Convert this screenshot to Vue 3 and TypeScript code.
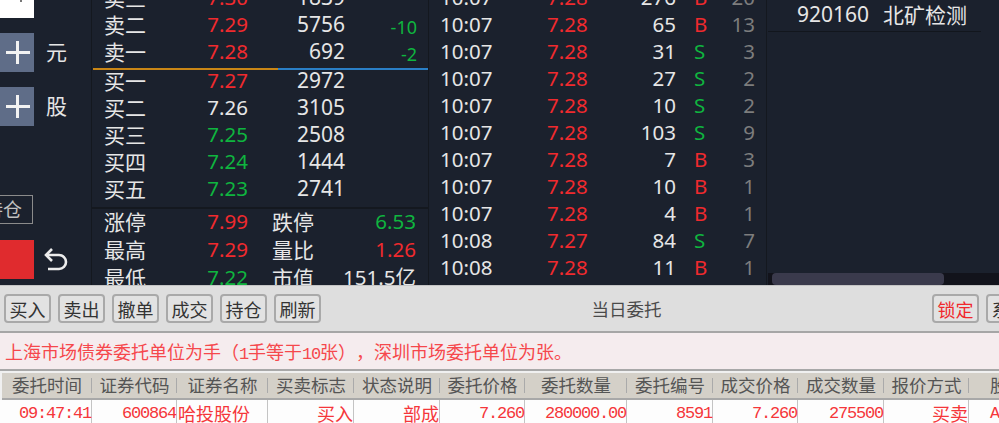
<script setup lang="ts">
type Tone = 'red' | 'green' | 'white'

const asks = [
  { name: '卖三', price: '7.30', tone: 'red', qty: '1839', delta: '' },
  { name: '卖二', price: '7.29', tone: 'red', qty: '5756', delta: '-10' },
  { name: '卖一', price: '7.28', tone: 'red', qty: '692', delta: '-2' },
]
const bids = [
  { name: '买一', price: '7.27', tone: 'red', qty: '2972', delta: '' },
  { name: '买二', price: '7.26', tone: 'white', qty: '3105', delta: '' },
  { name: '买三', price: '7.25', tone: 'green', qty: '2508', delta: '' },
  { name: '买四', price: '7.24', tone: 'green', qty: '1444', delta: '' },
  { name: '买五', price: '7.23', tone: 'green', qty: '2741', delta: '' },
]
const stats: { a: string; av: string; at: Tone; b: string; bv: string; bt: Tone }[] = [
  { a: '涨停', av: '7.99', at: 'red', b: '跌停', bv: '6.53', bt: 'green' },
  { a: '最高', av: '7.29', at: 'red', b: '量比', bv: '1.26', bt: 'red' },
  { a: '最低', av: '7.22', at: 'green', b: '市值', bv: '151.5亿', bt: 'white' },
]
const ticks = [
  ['10:07', '7.28', '276', 'B', '20'],
  ['10:07', '7.28', '65', 'B', '13'],
  ['10:07', '7.28', '31', 'S', '3'],
  ['10:07', '7.28', '27', 'S', '2'],
  ['10:07', '7.28', '10', 'S', '2'],
  ['10:07', '7.28', '103', 'S', '9'],
  ['10:07', '7.28', '7', 'B', '3'],
  ['10:07', '7.28', '10', 'B', '1'],
  ['10:07', '7.28', '4', 'B', '1'],
  ['10:08', '7.27', '84', 'S', '7'],
  ['10:08', '7.28', '11', 'B', '1'],
]
const tools = ['买入', '卖出', '撤单', '成交', '持仓', '刷新']
const headers = ['委托时间', '证券代码', '证券名称', '买卖标志', '状态说明', '委托价格', '委托数量', '委托编号', '成交价格', '成交数量', '报价方式', '股东代码']
const cells = [
  { text: '09:47:41', mono: true },
  { text: '600864', mono: true },
  { text: '哈投股份', left: true },
  { text: '买入' },
  { text: '部成' },
  { text: '7.260', mono: true },
  { text: '280000.00', mono: true },
  { text: '8591', mono: true },
  { text: '7.260', mono: true },
  { text: '275500', mono: true },
  { text: '买卖' },
  { text: 'A', mono: true, left: true },
]
</script>

<template>
  <div class="app">
    <section class="top">
      <aside class="side">
        <div class="blank"><i class="blank-mark" /></div>
        <div class="stepper">
          <span class="plus" /><span class="unit">元</span>
        </div>
        <div class="stepper">
          <span class="plus" /><span class="unit">股</span>
        </div>
        <div class="hold">持仓</div>
        <div class="action">
          <span class="confirm" />
          <svg class="undo" width="24" height="26" viewBox="0 0 24 26" fill="none" stroke="#ececec" stroke-width="2.6">
            <path d="M8 2 2 8l6 6" />
            <path d="M2 8h13a6.5 6.5 0 0 1 0 14H4" />
          </svg>
        </div>
      </aside>

      <div class="quote">
        <div class="book">
          <div v-for="r in asks" :key="r.name" class="qrow">
            <span class="cjk">{{ r.name }}</span>
            <span class="num" :class="r.tone">{{ r.price }}</span>
            <span class="num qty white">{{ r.qty }}</span>
            <span class="num green small">{{ r.delta }}</span>
          </div>
        </div>
        <div class="mid"><span class="mid-buy" /><span class="mid-sell" /></div>
        <div class="book">
          <div v-for="r in bids" :key="r.name" class="qrow">
            <span class="cjk">{{ r.name }}</span>
            <span class="num" :class="r.tone">{{ r.price }}</span>
            <span class="num qty white">{{ r.qty }}</span>
            <span />
          </div>
        </div>
        <div class="stats">
          <div v-for="s in stats" :key="s.a" class="srow">
            <span class="cjk">{{ s.a }}</span>
            <span class="num" :class="s.at">{{ s.av }}</span>
            <span class="cjk second">{{ s.b }}</span>
            <span class="num end" :class="s.bt">{{ s.bv }}</span>
          </div>
        </div>
      </div>

      <div class="ticks">
        <div v-for="(t, i) in ticks" :key="i" class="trow">
          <span class="white">{{ t[0] }}</span>
          <span class="red price">{{ t[1] }}</span>
          <span class="white right">{{ t[2] }}</span>
          <span class="flag" :class="t[3] === 'B' ? 'red' : 'green'">{{ t[3] }}</span>
          <span class="count right">{{ t[4] }}</span>
        </div>
      </div>

      <div class="watch">
        <div class="watch-head">
          <span class="code">920160</span><span class="stock">北矿检测</span>
        </div>
        <div class="watch-body" />
        <div class="scroll"><span class="thumb" /></div>
      </div>
    </section>

    <section class="bottom">
      <div class="toolbar">
        <div class="btns">
          <button v-for="t in tools" :key="t" class="btn">{{ t }}</button>
        </div>
        <div class="title">当日委托</div>
        <div class="btns">
          <button class="btn lock">锁定</button>
          <button class="btn">系统</button>
        </div>
      </div>
      <div class="notice">
        上海市场债券委托单位为手（<span class="mono">1</span>手等于<span class="mono">10</span>张），深圳市场委托单位为张。
      </div>
      <div class="thead-wrap">
        <div class="thead">
          <span v-for="h in headers" :key="h" class="th">{{ h }}</span>
        </div>
      </div>
      <div class="tbody">
        <span v-for="c in cells" :key="c.text" class="td" :class="{ mono: c.mono, left: c.left }">{{ c.text }}</span>
      </div>
    </section>
  </div>
</template>

<style scoped>
.app {
  width: 999px;
  height: 423px;
  overflow: hidden;
  background: #dcdcdc;
  font-family: "Noto Sans", "Noto Sans CJK SC", sans-serif;
  text-spacing-trim: space-all;
}
.top {
  display: flex;
  height: 285px;
  background: #1b212d;
  overflow: hidden;
}
.red { color: #f02a2e; }
.green { color: #0fb53f; }
.white { color: #e6e6e6; }

.side {
  width: 91px;
  flex: none;
  border-right: 1px solid #14181f;
}
.blank {
  position: relative;
  width: 34px;
  height: 18px;
  background: #fff;
}
.blank-mark {
  position: absolute;
  left: 20px;
  top: 0;
  width: 2px;
  height: 2px;
  background: #777;
}
.stepper {
  display: flex;
  align-items: center;
  margin-top: 15px;
  height: 39px;
}
.plus {
  position: relative;
  width: 34px;
  height: 39px;
  background: #5f6d88;
}
.plus::before,
.plus::after {
  content: "";
  position: absolute;
  background: #f2f2f2;
}
.plus::before { left: 6px; top: 18px; width: 24px; height: 3px; }
.plus::after { left: 16px; top: 8px; width: 3px; height: 23px; }
.unit {
  margin-left: 12px;
  padding-bottom: 4px;
  font-family: "Noto Sans CJK SC", sans-serif;
  font-size: 21px;
  color: #e6e6e6;
}
.hold {
  box-sizing: border-box;
  width: 60px;
  height: 29px;
  margin: 69px 0 0 -27px;
  border: 1px solid #8b8b8b;
  font-family: "Noto Sans CJK SC", sans-serif;
  font-size: 19px;
  line-height: 25px;
  text-align: right;
  padding-right: 10px;
  color: #c0c0c0;
  white-space: nowrap;
  overflow: hidden;
}
.action {
  display: flex;
  align-items: center;
  margin-top: 16px;
}
.confirm {
  width: 34px;
  height: 39px;
  background: #e02b2e;
}
.undo { margin-left: 10px; }

.quote {
  width: 336px;
  flex: none;
  margin-top: -15.5px;
  border-right: 1px solid #14181f;
}
.qrow,
.srow {
  display: grid;
  height: 27px;
  line-height: 24px;
  padding-left: 12px;
  white-space: nowrap;
}
.qrow { grid-template-columns: 76px 68px 97px 72px; }
.srow { height: 28px; grid-template-columns: 76px 68px 24px 42px 102px; }
.second { grid-column: 4; }
.end { grid-column: 5; }
.cjk {
  font-family: "Noto Sans CJK SC", sans-serif;
  font-size: 21px;
  color: #e6e6e6;
}
.num {
  text-align: right;
  font-size: 20.5px;
}
.qty { font-size: 21px; }
.small { font-size: 18px; padding-top: 3px; }
.mid {
  display: flex;
  height: 2px;
  margin: 2px 0 -2px;
  padding-left: 1px;
}
.mid-buy { width: 185px; background: #c98616; }
.mid-sell { width: 150px; background: #2a7fc6; }
.stats {
  margin-top: 4px;
  border-top: 2px solid #14181f;
}

.ticks {
  width: 338px;
  flex: none;
  margin-top: -15.5px;
  padding-left: 11px;
  box-sizing: border-box;
  border-right: 1px solid #14181f;
}
.trow {
  display: grid;
  grid-template-columns: 107px 70px 59px 18px 61px;
  height: 27px;
  line-height: 24px;
  font-size: 20.5px;
}
.right { text-align: right; }
.flag { padding-left: 18px; white-space: nowrap; }
.count { color: #7d7d7d; }

.watch {
  flex: 1;
  display: flex;
  flex-direction: column;
  margin-left: 1px;
}
.watch-head {
  display: flex;
  align-items: center;
  box-sizing: border-box;
  height: 32px;
  padding: 0 0 3px 29px;
  margin-right: 18px;
  border-bottom: 1px solid #12161d;
  color: #e6e6e6;
  font-size: 21px;
}
.stock {
  margin-left: 14px;
  font-family: "Noto Sans CJK SC", sans-serif;
  font-size: 21px;
}
.watch-body { flex: 1; }
.scroll {
  height: 12px;
  background: #12131b;
  padding-left: 4px;
}
.thumb {
  display: block;
  width: 172px;
  height: 12px;
  border-radius: 4px;
  background: #3a3a4c;
}

.bottom {
  color: #444;
  font-family: "Noto Sans CJK SC", sans-serif;
}
.toolbar {
  display: flex;
  align-items: center;
  width: 1033px;
  height: 48px;
  box-sizing: border-box;
  padding-left: 4px;
  border-top: 1px solid #c4c4c4;
  border-bottom: 2px solid #a6a6a6;
  background: #dedede;
}
.btns {
  display: flex;
  gap: 7px;
  flex: none;
}
.btn {
  box-sizing: border-box;
  width: 47px;
  height: 29px;
  padding: 0;
  border: 2px solid #a9a9a9;
  border-radius: 4px;
  background: #e2e2e2;
  font-family: "Noto Sans CJK SC", sans-serif;
  font-size: 18px;
  line-height: 24px;
  color: #333;
  white-space: nowrap;
  overflow: hidden;
}
.lock { color: #f0282c; }
.title {
  flex: 1;
  text-align: center;
  font-size: 17.5px;
  color: #4a4a4a;
}
.notice {
  height: 36px;
  line-height: 37px;
  padding-left: 5px;
  background: #f5ecee;
  color: #f5484c;
  font-size: 18px;
  white-space: nowrap;
}
.mono {
  font-family: "Liberation Mono", monospace;
  font-size: 17px;
  letter-spacing: -1.2px;
}
.thead-wrap {
  width: 1081px;
  padding: 2px 0 0 2px;
  border-top: 2px solid #a8a8a8;
  background: #f0f0f0;
}
.thead,
.tbody {
  display: grid;
  grid-template-columns: 92px 85px 91px 86px 86px 85px 102px 86px 85px 86px 85px 112px;
}
.thead {
  grid-template-columns: 90px 85px 91px 86px 86px 85px 102px 86px 85px 86px 85px 112px;
  height: 27px;
  box-sizing: border-box;
  background: #d4d0c8;
  border-bottom: 2px solid #a8a8a8;
}
.th {
  position: relative;
  line-height: 24px;
  text-align: center;
  font-size: 17.5px;
  color: #555;
  white-space: nowrap;
}
.th::after {
  content: "";
  position: absolute;
  right: 0;
  top: 5px;
  height: 15px;
  border-right: 1px solid #aaa;
}
.tbody {
  width: 1081px;
  height: 26px;
  background: #fdfdfd;
}
.td {
  box-sizing: border-box;
  line-height: 27px;
  text-align: right;
  font-size: 18px;
  color: #f5363a;
  border-right: 1px solid #c4c4c4;
  white-space: nowrap;
}
.td.left { text-align: left; padding-left: 1px; }
.td.mono { font-size: 17px; }
.td:last-child { padding-left: 21px; }
</style>

<style>
html, body { margin: 0; overflow: hidden; background: #dcdcdc; }
</style>
